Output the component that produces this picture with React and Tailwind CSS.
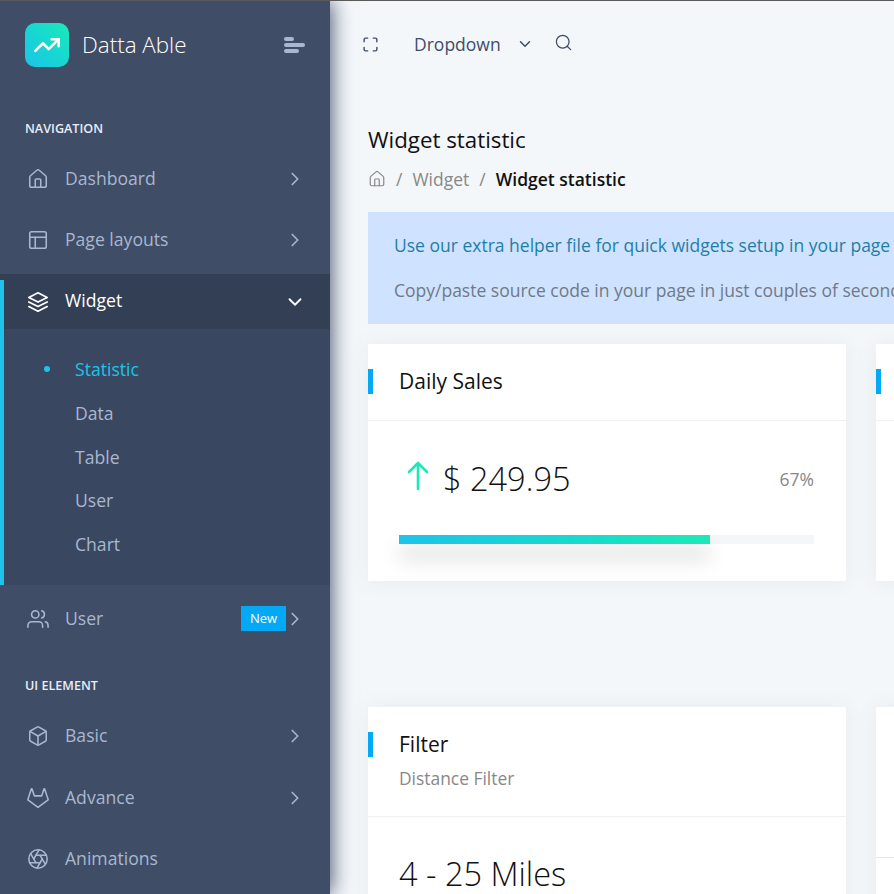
import { Aperture, ChevronDown, ChevronRight, House, Maximize, PanelsTopLeft, Search, TrendingUp } from 'lucide-react';
import { FiBox, FiGitlab, FiLayers, FiUsers } from 'react-icons/fi';

function NavItem({ icon: Icon, label, badge, arrow = true, className = 'mb-[6px]' }) {
    return (
        <div className={`flex items-center h-[55px] pl-[27px] pr-[24px] text-[#a9b7d0] ${className}`}>
            <Icon size={22} strokeWidth={1.7} className="shrink-0" />
            <span className="ml-[16px] text-[17.6px]">{label}</span>
            <span className="flex-1" />
            {badge && <span className="bg-[#04a9f5] text-white text-[13px] font-medium w-[45px] text-center h-[25px] leading-[25px] -mr-[2px]">{badge}</span>}
            {arrow && <ChevronRight size={22} strokeWidth={1.8} className="shrink-0" />}
        </div>
    );
}

function CardTitle({ title, sub, className }) {
    return (
        <div className={`relative pl-[31px] pt-[25px] border-b border-[#f1f1f1] ${className}`}>
            <span className="absolute left-0 top-[25px] w-[5px] h-[25px] bg-[#04a9f5]" />
            <h5 className="text-[21px] leading-[25px] text-[#111]">{title}</h5>
            {sub && <p className="mt-[9px] text-[17.4px] leading-[24px] text-[#888]">{sub}</p>}
        </div>
    );
}

export default function App() {
    return (
        <div className="w-[894px] h-[894px] overflow-hidden flex border-t border-[#5a5a5a] bg-[#f4f7fa] font-['Open_Sans',sans-serif]">
            {/* Sidebar */}
            <aside className="relative z-10 w-[330px] shrink-0 bg-[#3f4d67] shadow-[1px_0_20px_0_#3f4d67]">
                <div className="flex items-center h-[90px] pl-[25px] pr-[25px] pb-[2px]">
                    <div className="w-[44px] h-[44px] rounded-[10px] bg-gradient-to-tr from-[#1dc4e9] to-[#1de9b6] flex items-center justify-center">
                        <TrendingUp size={28} strokeWidth={2.2} className="text-white" />
                    </div>
                    <span className="ml-[13px] text-[22.4px] font-light text-white">Datta Able</span>
                    <span className="flex-1" />
                    <div className="flex flex-col gap-[2px] w-[21px]">
                        <span className="h-[4px] w-[10px] rounded-full bg-[#a9b7d0]" />
                        <span className="h-[4px] w-[21px] rounded-full bg-[#a9b7d0]" />
                        <span className="h-[4px] w-[15px] rounded-full bg-[#a9b7d0]" />
                    </div>
                </div>
                <div className="pl-[25px] pt-[29px] h-[60px] text-[12.6px] font-semibold text-[#e8edf7] uppercase">Navigation</div>
                <NavItem icon={House} label="Dashboard" />
                <NavItem icon={PanelsTopLeft} label="Page layouts" className="mb-[7px]" />
                <div className="bg-[#394760] h-[311px] relative">
                    <span className="absolute left-0 top-[6px] bottom-0 w-[4px] bg-[#1dc4e9]" />
                    <div className="flex items-center h-[55px] pl-[27px] pr-[24px] text-white bg-[#333f54]">
                        <FiLayers size={22} strokeWidth={1.9} />
                        <span className="ml-[16px] -mt-[2px] text-[17.6px] font-medium">Widget</span>
                        <span className="flex-1" />
                        <ChevronDown size={22} strokeWidth={2} />
                    </div>
                    <div className="pl-[75px] pt-[18px] text-[17.6px] text-[#a9b7d0]">
                        <div className="relative h-[44px] leading-[44px] text-[#1dc4e9]">
                            <span className="absolute left-[-31px] top-[19px] w-[6px] h-[6px] rounded-full bg-[#1dc4e9]" />
                            Statistic
                        </div>
                        <div className="h-[44px] leading-[44px]">Data</div>
                        <div className="h-[44px] leading-[44px]">Table</div>
                        <div className="h-[43px] leading-[43px]">User</div>
                        <div className="h-[44px] leading-[44px]">Chart</div>
                    </div>
                </div>
                <div className="h-[6px]" />
                <NavItem icon={FiUsers} label="User" badge="New" />
                <div className="pl-[25px] pt-[25px] h-[56px] text-[12.6px] font-semibold text-[#e8edf7] uppercase">UI Element</div>
                <NavItem icon={FiBox} label="Basic" className="mb-[7px]" />
                <NavItem icon={FiGitlab} label="Advance" />
                <NavItem icon={Aperture} label="Animations" arrow={false} />
            </aside>

            {/* Main */}
            <main className="flex-1 min-w-0">
                <div className="flex items-center h-[86px] pl-[32px] text-[#3f4d67]">
                    <Maximize size={17} strokeWidth={2} />
                    <span className="ml-[35px] text-[17.5px]">Dropdown</span>
                    <ChevronDown size={18} className="ml-[15px]" />
                    <Search size={19} strokeWidth={1.6} className="ml-[20px] -mt-[4px]" />
                </div>
                <div className="pl-[38px] w-[1000px]">
                    <h5 className="mt-[38px] text-[22.3px] leading-[30px] text-[#111]">Widget statistic</h5>
                    <div className="flex items-center mt-[12px] h-[24px] text-[17.5px]">
                        <House size={18} strokeWidth={1.6} className="text-[#888]" />
                        <span className="mx-[10px] text-[#888]">/</span>
                        <span className="text-[#888]">Widget</span>
                        <span className="mx-[10px] text-[#888]">/</span>
                        <span className="font-semibold text-[#111]">Widget statistic</span>
                    </div>
                    <div className="mt-[21px] h-[112px] bg-[#cfe2ff] pl-[26px] pt-[21px] text-[17.5px] whitespace-nowrap">
                        <p className="leading-[25px] text-[#1f7ea8]">Use our extra helper file for quick widgets setup in your page</p>
                        <p className="mt-[20px] leading-[25px] text-[#6f7a86]">Copy/paste source code in your page in just couples of seconds.</p>
                    </div>

                    {/* Cards */}
                    <div className="flex gap-[30px] mt-[20px]">
                        <section className="w-[478px] shrink-0 h-[237px] bg-white shadow-[0_1px_20px_rgba(69,90,100,0.08)]">
                            <CardTitle title="Daily Sales" className="h-[77px]" />
                            <div className="px-[31px] pr-[32px]">
                                <div className="flex items-center h-[114px] pt-[2px]">
                                    <svg width="22" height="30" viewBox="0 0 22 30" fill="none" stroke="#1de9b6" strokeWidth="2.6" strokeLinecap="round" strokeLinejoin="round" className="ml-[8px] -mt-[6px] shrink-0">
                                        <path d="M11 2v26M2 11l9-9 9 9" />
                                    </svg>
                                    <span className="ml-[14px] text-[32.5px] font-light text-[#111]">$ 249.95</span>
                                    <span className="flex-1" />
                                    <span className="text-[17.5px] text-[#888]">67%</span>
                                </div>
                                <div className="h-[9px] bg-[#f4f7fa]">
                                    <div className="h-full w-[75%] bg-gradient-to-r from-[#1dc4e9] to-[#1de9b6] shadow-[0_14px_20px_rgba(0,0,0,0.18)]" />
                                </div>
                            </div>
                        </section>
                        <section className="w-[478px] shrink-0 h-[237px] bg-white shadow-[0_1px_20px_rgba(69,90,100,0.08)]">
                            <CardTitle title="" className="h-[77px]" />
                        </section>
                    </div>
                    <div className="flex gap-[30px] mt-[126px]">
                        <section className="w-[478px] shrink-0 h-[400px] bg-white shadow-[0_1px_20px_rgba(69,90,100,0.08)]">
                            <CardTitle title="Filter" sub="Distance Filter" className="h-[110px]" />
                            <div className="pl-[31px] pt-[34px] text-[32.5px] font-light text-[#111] leading-[46px]">4 - 25 Miles</div>
                        </section>
                        <section className="w-[478px] shrink-0 h-[400px] bg-white shadow-[0_1px_20px_rgba(69,90,100,0.08)]">
                            <div className="h-[151px] border-b border-[#e8e8e8]" />
                        </section>
                    </div>
                </div>
            </main>
        </div>
    );
}
